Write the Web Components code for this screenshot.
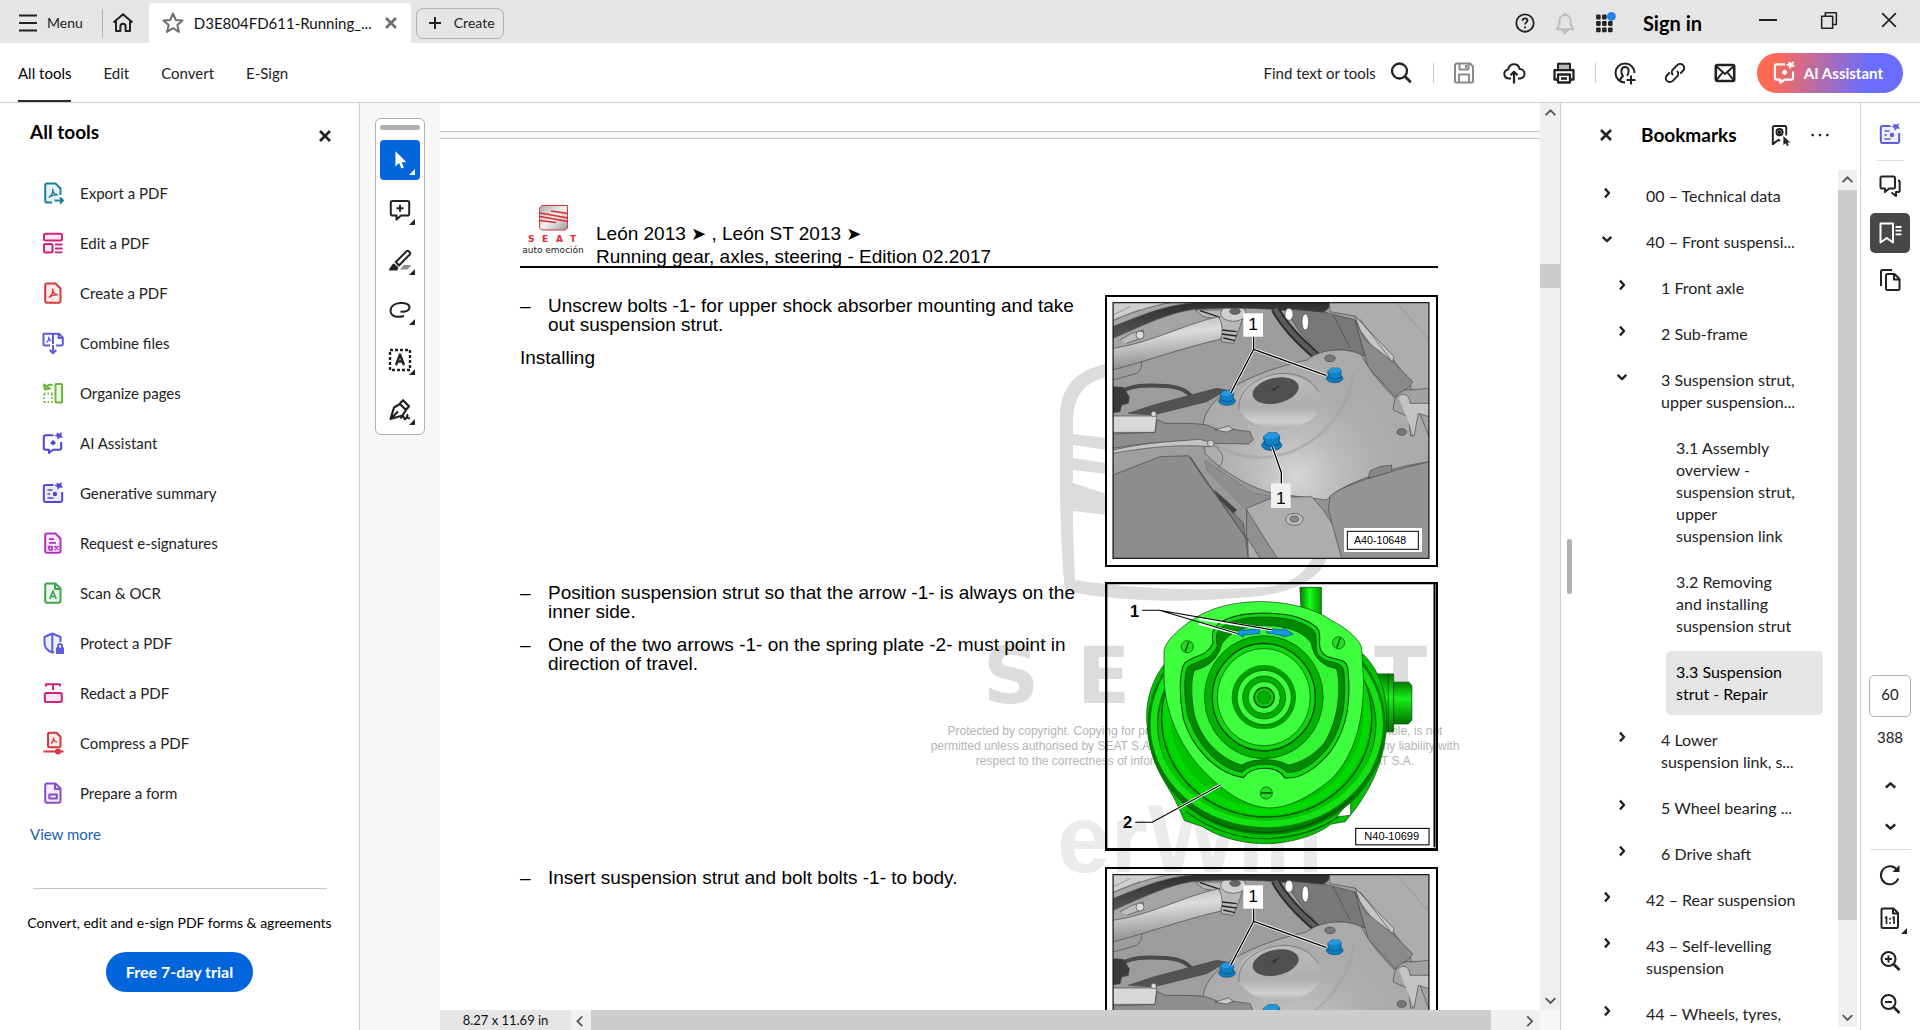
<!DOCTYPE html>
<html lang="en">
<head>
<meta charset="utf-8">
<title>D3E804FD611-Running gear</title>
<style>
  html, body { margin: 0; height: 100%; }
  body { font-family: Lato, "Open Sans", sans-serif; font-size: 15px; line-height: 20px; color: #222; background: #fff; overflow: hidden; }
</style>
</head>
<body>
<pdf-app></pdf-app>
<script>
const BASE = `
  *, *::before, *::after { box-sizing: border-box; }
  button, input { font: inherit; color: inherit; margin: 0; }
  button { background: none; border: 0; padding: 0; text-align: left; cursor: pointer; }
  button, a { display: inline-flex; align-items: center; }
  a { color: inherit; text-decoration: none; }
  svg { display: block; }
`;
function define(name, css, html) {
  const tpl = document.createElement('template');
  tpl.innerHTML = `<style>${BASE}${css}</style>${html}`;
  customElements.define(name, class extends HTMLElement {
    constructor() {
      super();
      this.attachShadow({ mode: 'open' }).append(tpl.content.cloneNode(true));
    }
  });
}

/* ---------- icons ---------- */
const acro = `<path d="M8.2 16.2C10.5 14.6 12 11.400 11.700 8.200c0 3 2 5.100 4.600 5.500-3-.1-5.800.7-8.100 2.500z" stroke-width="1.400"/>`;
const sheet = `<path d="M6 2.500h8.500l5 5V20a1.800 1.800 0 0 1-1.800 1.800H6A1.800 1.800 0 0 1 4.200 20V4.300A1.800 1.800 0 0 1 6 2.500z" fill="currentColor" fill-opacity=".1"/>`;
const sparkle = `<path d="M15.500 1.500l2.800 1.200 3-1.700-1 3 1.700 2.800-3-.4-2.200 2.400-.7-3-3-1.300 2.700-1z" fill="currentColor" stroke="none"/>`;
const lens = `<circle cx="10.500" cy="10" r="7"/><path d="M16 15.500l5.500 5.500" stroke-width="2.600"/>`;
const ICONS = {
  menu: `<path d="M3 4.500h18M3 12h18M3 19.500h18"/>`,
  home: `<path d="M2.500 11.500L12 3.200l9.500 8.300M5 10v10h4.400v-4.600a2.600 2.600 0 0 1 5.200 0V20H19V10"/>`,
  star: `<path d="M12 2.500l2.700 6.400 6.900.6-5.300 4.600 1.700 6.800L12 17.200l-6 3.700 1.700-6.800-5.300-4.600 6.900-.6z"/>`,
  close: `<path d="M6 6l12 12M18 6L6 18" stroke-width="3.200"/>`,
  xthin: `<path d="M4.500 4.500l15 15M19.500 4.500l-15 15" stroke-width="1.800"/>`,
  plus: `<path d="M12 5.500v13M5.500 12h13" stroke-width="2.200"/>`,
  help: `<circle cx="12" cy="12" r="9.500"/><path d="M9.300 9.500c0-1.600 1.100-2.600 2.700-2.600s2.700 1 2.700 2.400c0 2-2.600 2-2.600 4.200"/><path d="M12 15.800v2" stroke-width="2.200"/>`,
  bell: `<path d="M12 2v2M12 4c-3.800 0-5.600 2.800-5.600 6v3.600L3.800 18.200h16.400l-2.600-4.600V10c0-3.200-1.800-6-5.600-6z"/><path d="M9.500 19.500h5L12 22z" fill="currentColor"/>`,
  apps: `<g stroke-width="2.400"><rect x="3.500" y="4" width="2.600" height="3"/><rect x="10" y="4" width="2.600" height="3"/><rect x="3.500" y="11" width="2.600" height="3"/><rect x="10" y="11" width="2.600" height="3"/><rect x="16.500" y="11" width="2.600" height="3"/><rect x="3.500" y="18" width="2.600" height="3"/><rect x="10" y="18" width="2.600" height="3"/><rect x="16.500" y="18" width="2.600" height="3"/></g><circle cx="19" cy="4.800" r="4.800" fill="#2680eb" stroke="none"/>`,
  minimize: `<path d="M3 12h18"/>`,
  restore: `<path d="M4 8h12v13H4zM8 8V4h12v13h-4" stroke-width="1.700"/>`,
  search: `<circle cx="10.500" cy="10" r="7.500" stroke-width="2.300"/><path d="M16 15.500l5.800 5.800" stroke-width="2.700"/>`,
  save: `<path d="M4 2.500h14l3 3V20a1.500 1.500 0 0 1-1.500 1.500h-15A1.500 1.500 0 0 1 3 20V4zM7.500 3v5.500h9V3M7 21v-7.500h10V21M14 4v3"/>`,
  cloud: `<path d="M9 17.500H6.500a4.600 4.600 0 0 1-.4-9.100C7 5 9.200 3.300 12 3.300s5 1.900 5.600 4.700a4.700 4.700 0 0 1 .4 9.500h-2"/><path d="M12 22.500V11M8.500 14.200L12 10.700l3.500 3.500" stroke-width="2.200"/>`,
  print: `<path d="M6 8V2.800h12V8" fill="#bbb"/><path d="M6 18.500H2.500V9.200h19v9.300H18M6 13.500h12v8H6zM9 17.500h6" stroke-width="2.300"/>`,
  adduser: `<path d="M12 21.500A9.500 9.500 0 1 1 21.500 12M7 19.500c.5-3 2-3.500 3-4.400-2.500-3-2.500-9 2-9s4.500 5.500 2 8.800M18 14.500v9M13.500 19H22.500"/>`,
  link: `<path d="M10 14a4 4 0 0 1 0-5.600l4.300-4.300a4 4 0 0 1 5.700 5.700l-2.800 2.800M14 10a4 4 0 0 1 0 5.600l-4.300 4.300A4 4 0 0 1 4 14.200l2.800-2.800"/>`,
  mail: `<rect x="2.800" y="4" width="18.400" height="16" rx="1.500" stroke-width="2.600"/><path d="M3.500 5.500l8.500 7.500 8.500-7.500M3.500 19l6-7.500M20.500 19l-6-7.500"/>`,
  ai: `<path d="M12.500 4.200H4.600A1.800 1.800 0 0 0 2.800 6v11a1.800 1.800 0 0 0 1.800 1.800H8V22l4-3.200h6.400a1.800 1.800 0 0 0 1.800-1.800V11"/><path d="M12 10.200l1.800 1.500-1.600 1.600-1.700-1.300z" fill="currentColor"/>${sparkle}`,
  summary: `<path d="M12.500 4H4.600a1.800 1.800 0 0 0-1.800 1.800v13.400A1.800 1.800 0 0 0 4.600 21h14.800a1.800 1.800 0 0 0 1.800-1.800V11" fill="currentColor" fill-opacity=".1"/><path d="M6.500 9h5M6.500 13h2.500M6.500 17h6M12 13h3" stroke-width="1.700"/><circle cx="14" cy="13" r="1.200" fill="currentColor"/>${sparkle}`,
  export: `<path d="M11 21.500H6A1.800 1.800 0 0 1 4.200 19.700V4.300A1.800 1.800 0 0 1 6 2.500h8.500l5 5V14" fill="currentColor" fill-opacity=".1"/>${acro}<path d="M13.500 19.500h8M19 16.500l3 3-3 3"/>`,
  edit: `<rect x="3" y="2.800" width="18" height="6.800" rx="1.500" fill="currentColor" fill-opacity=".1"/><rect x="3" y="13" width="8.500" height="8.500" rx="1.500" fill="currentColor" fill-opacity=".1"/><path d="M14 13.500h7.500M14 17.500h7.500M14 21.300h7.500" stroke-width="1.800"/>`,
  create: sheet + acro,
  combine: `<path d="M9 14.500H3.800A1.300 1.300 0 0 1 2.500 13.200V2.800H11c1 0 1 .8 1 1.500 0-.7 0-1.500 1-1.500h5l3.800 3.800v6.600a1.300 1.300 0 0 1-1.300 1.300H15M12 4v9M17.500 3v4h4" /><path d="M5.500 11.500c1.500-1 2.500-3 2.300-5.500 0 2 1 3.500 2.500 3.800" stroke-width="1.200"/><path d="M12 14v8M8.800 19l3.200 3.200 3.200-3.200"/>`,
  organize: `<rect x="14.500" y="3" width="6.500" height="18.500" rx=".8" fill="currentColor" fill-opacity=".1"/><path d="M11.500 4.500C9 3 6 4 5 6.500M3 3.500l1 5 5-1z" /><path d="M3 12.500h9M3 21h9M3 13v8M11 13v8" stroke-dasharray="1.500 2" stroke-width="1.800"/>`,
  sign: `${sheet}<path d="M8 8.200h5M8 11.800h7" stroke-width="1.700"/><path d="M7.500 15.500h3.500v3.500H8.500zM13.500 15l4 4M17.500 15l-4 4" stroke-width="1.700"/>`,
  ocr: `${sheet}<path d="M14 3v5h5"/><path d="M8.800 18l3.200-8 3.200 8M10 15.500h4" stroke-width="1.700"/>`,
  protect: `<path d="M19.500 11V6L11.300 2.500 3.500 6v6c0 5 3.500 8 7.800 9.500 1 0 1.700-.5 1.700-.5" fill="currentColor" fill-opacity=".1"/><path d="M11.300 3v18"/><rect x="15" y="16.500" width="8" height="6.500" fill="currentColor" stroke="none"/><path d="M17 17v-2a2 2 0 0 1 4 0v2"/>`,
  redact: `<path d="M5 5.500V3.200h14v2.300M12 3.500V9"/><rect x="3.800" y="12" width="17" height="9" rx="1.500" fill="currentColor" fill-opacity=".1"/>`,
  compress: `<path d="M8.500 1.800h7l4 4v9a1.500 1.500 0 0 1-1.500 1.500H8.500A1.500 1.500 0 0 1 7 14.800V3.300a1.500 1.500 0 0 1 1.500-1.500z" fill="currentColor" fill-opacity=".1"/><path d="M10 12.500c1.700-1.200 2.700-3 2.500-5.500.1 2.200 1.500 3.700 3.500 4" stroke-width="1.300"/><path d="M2.500 20.500h20"/><circle cx="17" cy="20.500" r="2" fill="currentColor"/>`,
  form: `${sheet}<path d="M14 3v5h5"/><rect x="8.300" y="13.500" width="7.500" height="4" />`,
  arrow: `<path d="M7 2.500v16.500l4-3.600 2.600 6 2.700-1.200-2.600-5.800h5.300z" fill="currentColor" stroke="none"/>`,
  comment: `<path d="M4.600 3h14.800a1.800 1.800 0 0 1 1.800 1.800v11a1.800 1.800 0 0 1-1.800 1.800H13l-4.500 4v-4H4.600a1.800 1.800 0 0 1-1.800-1.800v-11A1.800 1.800 0 0 1 4.600 3z"/><path d="M12 6.800v7M8.500 10.300h7"/>`,
  highlight: `<path d="M12 21.500l3.500-4.500h8L19.500 21.500z" fill="#8f8f8f" stroke="none"/><path d="M7.800 14l10.700-10.700a1.500 1.500 0 0 1 2.200 0l1 1a1.500 1.500 0 0 1 0 2.200L11 17.500z" fill="#fff"/><path d="M5.500 16.500l3.800 3.300-.8 1.700H2z" fill="currentColor"/>`,
  draw: `<path d="M12.500 13.500c5 .7 9-1 9-4 0-3.400-4-4.700-9-4.500C7 5.200 2.500 8 2.500 13c0 4 4 5.800 7.500 5.800 1.700 0 4-.2 6-.8"/>`,
  textbox: `<rect x="2" y="2" width="20" height="20" stroke-dasharray="3 2" stroke-width="2.400"/><path d="M8 17l4-10.500L16 17M9.500 13.500h5" stroke-width="2.400"/>`,
  pen: `<path d="M2.500 21L6 9.500l6-3.500 6 6-3.500 5.500zM3 20.500l7-7M12 5.500l3-3.300 6 6-3 3.500" stroke-width="2.200"/><path d="M12.500 20.500c2-3 3-3 3.500-.5s2 1 3.500-3c-.5 3 0 4 2.500 3"/>`,
  addmark: `<path d="M4 3.500A1.500 1.500 0 0 1 5.500 2h11A1.500 1.500 0 0 1 18 3.500V12M4 3v18l6-4.500 1.500 1.200"/><circle cx="11" cy="8.500" r="3.200"/><circle cx="11" cy="8.500" r="1" fill="currentColor"/><path d="M15 12.500V22l2.500-2 1.300 3 1.800-.8-1.300-2.800h3z" fill="currentColor" stroke="none"/>`,
  dots: `<g fill="currentColor" stroke="none"><circle cx="4" cy="12" r="1.500"/><circle cx="12" cy="12" r="1.500"/><circle cx="20" cy="12" r="1.500"/></g>`,
  right: `<path d="M8.500 4.500l7 7.500-7 7.500" stroke-width="4"/>`,
  down: `<path d="M4.500 8.500l7.500 7 7.500-7" stroke-width="4"/>`,
  up: `<path d="M4.500 15.500l7.500-7 7.500 7" stroke-width="4"/>`,
  chats: `<path d="M4 2.500h11.500A1.500 1.500 0 0 1 17 4v9a1.500 1.500 0 0 1-1.500 1.500H11L7 18v-3.500H4A1.500 1.500 0 0 1 2.500 13V4A1.500 1.500 0 0 1 4 2.500z"/><path d="M20 6.500c1.200 0 1.700.5 1.700 1.500v8.500a1.500 1.500 0 0 1-1.500 1.500H18v4l-4.500-3.500"/>`,
  marks: `<path d="M2.500 2.500h12.500v19l-6.200-4.500-6.300 4.500z"/><path d="M17.500 6h6M17.500 9.700h6M17.500 13.300h6" stroke-width="1.800"/>`,
  pages: `<path d="M9.500 6h7l5 5v9.500a1.500 1.500 0 0 1-1.500 1.500H9.500A1.500 1.500 0 0 1 8 20.500v-13A1.500 1.500 0 0 1 9.500 6zM16 6v5.500h5"/><path d="M3 18V3.500A1.500 1.500 0 0 1 4.500 2H14"/>`,
  rotate: `<path d="M20.300 15.500a9 9 0 1 1-.8-8"/><path d="M21.500 2v7h-7z" fill="currentColor" stroke="none"/>`,
  fit: `<path d="M5 2.500h10.500l4.500 4.500v13.500a1.500 1.500 0 0 1-1.500 1.500H5a1.500 1.500 0 0 1-1.500-1.500V4A1.500 1.500 0 0 1 5 2.500zM15 3v4.500h4.500"/><path d="M7 12.200l1.500-1.200v7M14.500 12.200l1.500-1.200v7" stroke-width="1.700"/><circle cx="12" cy="12.800" r=".4" stroke-width="1.300"/><circle cx="12" cy="17" r=".4" stroke-width="1.300"/>`,
  zoomin: `${lens}<path d="M10.500 6.500v7M7 10h7"/>`,
  zoomout: `${lens}<path d="M7 10h7"/>`,
};
customElements.define('ui-icon', class extends HTMLElement {
  connectedCallback() {
    if (this.shadowRoot) return;
    const s = this.getAttribute('size') || 24;
    this.attachShadow({ mode: 'open' }).innerHTML =
      `<style>:host{display:inline-flex;flex:none}svg{display:block}</style>
       <svg width="${s}" height="${s}" viewBox="0 0 24 24" fill="none" stroke="currentColor" stroke-width="2" stroke-linejoin="round" aria-hidden="true">${ICONS[this.getAttribute('name')]}</svg>`;
  }
});

/* ---------- title bar ---------- */
define('title-bar', `
  :host { display: flex; align-items: center; height: 43px; background: #e5e5e5; padding: 0 20px 0 16px; font-size: 14px; }
  .menu { gap: 7px; padding-top: 3px; }
  .home { margin-left: 8px; padding-top: 3px; }
  .sep { width: 1px; height: 29px; background: #b3b3b3; margin: 3px 0 0 19px; }
  .tab { align-self: flex-end; display: flex; align-items: center; height: 40px; width: 262px; margin-left: 14px; padding: 0 10px 0 12px; background: #fff; border-radius: 4px 4px 0 0; font-size: 15px; color: #111; }
  .tab ui-icon { color: #6e6e6e; }
  .tab .name { flex: 1; padding-left: 9px; white-space: nowrap; }
  .create { height: 31px; margin: 3px 0 0 5px; padding: 0 8px 0 7px; gap: 8px; border: 1px solid #b1b1b1; border-radius: 7px; }
  .right { margin-left: auto; display: flex; align-items: center; gap: 17px; padding-top: 3px; }
  .bell { color: #bdbdbd; }
  .sign { font-size: 20px; font-weight: 700; color: #000; margin: 0 0 0 10px; }
  .win { gap: 38px; display: flex; margin: -6px 0 0 37px; }
`, `
  <button class="menu"><ui-icon name="menu"></ui-icon>Menu</button>
  <span class="sep"></span>
  <button class="home" aria-label="Home"><ui-icon name="home"></ui-icon></button>
  <div class="tab"><ui-icon name="star"></ui-icon><span class="name">D3E804FD611-Running_...</span><button aria-label="Close tab"><ui-icon name="close" size="20"></ui-icon></button></div>
  <button class="create"><ui-icon name="plus" size="22"></ui-icon>Create</button>
  <div class="right">
    <button aria-label="Help"><ui-icon name="help" size="22"></ui-icon></button>
    <button class="bell" aria-label="Notifications"><ui-icon name="bell" size="24"></ui-icon></button>
    <button aria-label="Apps"><ui-icon name="apps" size="22"></ui-icon></button>
    <button class="sign">Sign in</button>
    <div class="win">
      <button aria-label="Minimize"><ui-icon name="minimize"></ui-icon></button>
      <button aria-label="Restore"><ui-icon name="restore" size="22"></ui-icon></button>
      <button aria-label="Close"><ui-icon name="xthin" size="22"></ui-icon></button>
    </div>
  </div>
`);

/* ---------- toolbar ---------- */
define('main-toolbar', `
  :host { display: flex; align-items: center; height: 60px; border-bottom: 1px solid #d0d0d0; padding: 0 17px 0 18px; background: #fff; }
  nav { display: flex; align-self: stretch; gap: 32px; }
  nav a[aria-current] { color: #000; box-shadow: inset 0 -2px #2c2c2c; }
  .right { margin-left: auto; display: flex; align-items: center; }
  .find { gap: 13px; padding-right: 20px; }
  .sep { width: 1px; height: 20px; background: #ccc; }
  .grp { display: flex; gap: 26px; margin: 0 19px 0 18px; }
  .grp.two { margin: 0 20px 0 17px; }
  .dim { color: #8a8a8a; }
  .ai { height: 40px; padding: 0 20px 0 15px; gap: 7px; border-radius: 20px; color: #fff; font-weight: 700; background: linear-gradient(100deg, #ff6a55 12%, #6a6dff 75%); }
`, `
  <nav><a href="#" aria-current="page">All tools</a><a href="#">Edit</a><a href="#">Convert</a><a href="#">E-Sign</a></nav>
  <div class="right">
    <button class="find">Find text or tools<ui-icon name="search"></ui-icon></button>
    <span class="sep"></span>
    <div class="grp">
      <button class="dim" aria-label="Save"><ui-icon name="save"></ui-icon></button>
      <button aria-label="Upload"><ui-icon name="cloud"></ui-icon></button>
      <button aria-label="Print"><ui-icon name="print"></ui-icon></button>
    </div>
    <span class="sep"></span>
    <div class="grp two">
      <button aria-label="Share"><ui-icon name="adduser"></ui-icon></button>
      <button aria-label="Copy link"><ui-icon name="link"></ui-icon></button>
      <button aria-label="Email"><ui-icon name="mail"></ui-icon></button>
    </div>
    <button class="ai"><ui-icon name="ai" size="25"></ui-icon>AI Assistant</button>
  </div>
`);

/* ---------- left panel ---------- */
customElements.define('tool-item', class extends HTMLElement {
  connectedCallback() {
    if (this.shadowRoot) return;
    this.attachShadow({ mode: 'open' }).innerHTML = `<style>${BASE}
      :host { display: block; }
      button { width: 100%; height: 50px; gap: 15px; padding-left: 41px; font-size: 15px; }
      ui-icon { color: ${this.getAttribute('tint')}; }
    </style><button><ui-icon name="${this.getAttribute('icon')}"></ui-icon><slot></slot></button>`;
  }
});
define('tools-panel', `
  :host { display: flex; flex-direction: column; border-right: 1px solid #d0d0d0; background: #fff; }
  header { display: flex; justify-content: space-between; padding: 17px 24px 0 30px; height: 65px; }
  h2 { margin: 0; font-size: 19px; line-height: 24px; font-weight: 700; color: #000; }
  header button { align-self: flex-start; margin-top: 6px; }
  .more { margin: 6px 0 0 30px; color: #1a5fb4; align-self: flex-start; }
  hr { width: 294px; border: 0; border-top: 1px solid #c4c4c4; margin: 44px 0 0 33px; }
  p { margin: 24px 0 19px; text-align: center; font-size: 14px; color: #000; white-space: nowrap; }
  .trial { align-self: center; height: 40px; padding: 0 20px; border-radius: 20px; background: #0265dc; color: #fff; font-weight: 700; font-size: 16px; }
`, `
  <header><h2>All tools</h2><button aria-label="Close panel"><ui-icon name="close" size="20"></ui-icon></button></header>
  <tool-item icon="export" tint="#1d8296">Export a PDF</tool-item>
  <tool-item icon="edit" tint="#d0217c">Edit a PDF</tool-item>
  <tool-item icon="create" tint="#d7373f">Create a PDF</tool-item>
  <tool-item icon="combine" tint="#5c5ce0">Combine files</tool-item>
  <tool-item icon="organize" tint="#6ab83a">Organize pages</tool-item>
  <tool-item icon="ai" tint="#5046d8">AI Assistant</tool-item>
  <tool-item icon="summary" tint="#5046d8">Generative summary</tool-item>
  <tool-item icon="sign" tint="#b130bd">Request e-signatures</tool-item>
  <tool-item icon="ocr" tint="#3da74e">Scan &amp; OCR</tool-item>
  <tool-item icon="protect" tint="#5c5ce0">Protect a PDF</tool-item>
  <tool-item icon="redact" tint="#d0217c">Redact a PDF</tool-item>
  <tool-item icon="compress" tint="#d7373f">Compress a PDF</tool-item>
  <tool-item icon="form" tint="#864ccc">Prepare a form</tool-item>
  <a class="more" href="#">View more</a>
  <hr>
  <p>Convert, edit and e-sign PDF forms &amp; agreements</p>
  <button class="trial">Free 7-day trial</button>
`);

/* ---------- quick tools palette ---------- */
define('quick-tools', `
  :host { display: flex; flex-direction: column; align-items: center; gap: 10px; width: 50px; height: 317px; padding: 6px 0 5px; border: 1px solid #b1b1b1; border-radius: 6px; background: #fff; }
  .grip { width: 40px; height: 5px; border-radius: 2px; background: #b1b1b1; flex: none; }
  button { width: 40px; height: 40px; flex: none; justify-content: center; position: relative; border-radius: 4px; }
  button::after { content: ""; position: absolute; right: 5px; bottom: 5px; border: 3px solid; border-color: transparent currentColor currentColor transparent; }
  .on { background: #0265dc; color: #fff; }
`, `
  <span class="grip"></span>
  <button class="on" aria-label="Select"><ui-icon name="arrow" size="22"></ui-icon></button>
  <button aria-label="Comment"><ui-icon name="comment"></ui-icon></button>
  <button aria-label="Highlight"><ui-icon name="highlight"></ui-icon></button>
  <button aria-label="Draw"><ui-icon name="draw"></ui-icon></button>
  <button aria-label="Text box"><ui-icon name="textbox"></ui-icon></button>
  <button aria-label="Sign"><ui-icon name="pen"></ui-icon></button>
`);

/* ---------- figures ---------- */
define('strut-mount-figure', `:host { display: block; } svg { width: 333px; height: 272px; } .t { font-family: "Liberation Sans", sans-serif; fill: #000; }`, `
<svg viewBox="195 45 999 816" role="img" aria-label="Upper shock absorber mounting">
  <defs>
    <linearGradient id="bg" x1="0" y1="0" x2="1" y2="1"><stop offset="0" stop-color="#a8a8a8"/><stop offset="1" stop-color="#8c8c8c"/></linearGradient>
    <linearGradient id="tube" x1="0" y1="0" x2=".2" y2="1"><stop offset="0" stop-color="#b0b0b0"/><stop offset=".4" stop-color="#dcdcdc"/><stop offset="1" stop-color="#8b8b8b"/></linearGradient>
    <radialGradient id="tower" gradientUnits="userSpaceOnUse" cx="770" cy="590" r="420"><stop offset="0" stop-color="#d6d6d6"/><stop offset=".3" stop-color="#bcbcbc"/><stop offset=".6" stop-color="#adadad"/><stop offset="1" stop-color="#a9a9a9"/></radialGradient>
    <linearGradient id="dome" x1="0" y1="0" x2="0" y2="1"><stop offset="0" stop-color="#bcbcbc"/><stop offset=".6" stop-color="#aeaeae"/><stop offset=".86" stop-color="#d0d0d0"/><stop offset="1" stop-color="#b0b0b0"/></linearGradient>
    <linearGradient id="hose" x1="0" y1="0" x2="0" y2="1"><stop offset="0" stop-color="#2e2e2e"/><stop offset="1" stop-color="#565656"/></linearGradient>
    <clipPath id="c"><rect x="219" y="68" width="948" height="767"/></clipPath>
    <g id="bolt"><ellipse cx="1" cy="8" rx="25" ry="13" fill="#0d7cc0" stroke="#07507c" stroke-width="2"/><path d="M-20 -13L-8 -23H14L21 -15L19 5L4 11L-16 6Z" fill="#0f7fc6" stroke="#07507c" stroke-width="2"/><path d="M-20 -13L-8 -23H14L21 -15L7 -8L-10 -7Z" fill="#2596d8"/></g>
  </defs>
  <rect x="198" y="48" width="993" height="810" fill="none" stroke="#000" stroke-width="6"/>
  <g clip-path="url(#c)" stroke="#484848" stroke-width="2" stroke-linejoin="round">
    <rect x="219" y="68" width="948" height="767" fill="url(#bg)"/>
    <path d="M219 68H390C330 78 270 100 219 122Z" fill="#cfcfcf"/>
    <path d="M219 120L300 88M219 105L270 80" stroke="#777"/>
    <path d="M219 275L470 180L540 170L600 120L700 90L830 230L640 270C560 300 510 330 490 370L219 420Z" fill="#9c9c9c" stroke="none"/>
    <path d="M465 90L490 110L535 118L545 185L580 190L600 140L615 90Z" fill="#b8b8b8"/>
    <path d="M545 150l45 5M545 162l45 6M550 174l35 8M480 92l60 20" stroke="#222" stroke-width="4"/>
    <ellipse cx="580" cy="100" rx="38" ry="24" fill="#d0d0d0"/><ellipse cx="585" cy="94" rx="16" ry="9" fill="#666"/>
    <path d="M219 205C330 190 440 130 535 110C548 125 550 165 540 178C440 200 330 240 219 270Z" fill="url(#tube)"/>
    <path d="M240 180L275 160L310 150V172L260 190" fill="#bcbcbc"/><circle cx="300" cy="165" r="12" fill="#ddd"/>
    <path d="M219 300L290 280C305 270 305 255 305 245" fill="none"/>
    <path d="M219 140C330 95 380 75 470 68H868C872 98 830 106 800 100C700 82 560 82 460 88C380 100 300 140 219 175Z" fill="url(#hose)"/>
    <path d="M705 86C740 150 790 195 835 232" fill="none" stroke="#2c2c2c" stroke-width="26"/><path d="M705 86C740 150 790 195 835 232" fill="none" stroke="#5c5c5c" stroke-width="14"/>
    <path d="M740 86L860 98L945 120L975 228L900 208L845 228C800 180 760 140 740 86Z" fill="#787878"/>
    <path d="M880 105L930 205" fill="none"/>
    <path d="M868 68H1167V335L1115 330C1110 300 1050 220 945 108L870 95Z" fill="#adadad"/>
    <path d="M1070 68L1167 180" stroke="#8c8c8c" fill="none"/>
    <path d="M945 108L1062 230L1058 246L1000 205L960 150Z" fill="#c6c6c6"/><path d="M960 118L1050 236" fill="none"/>
    <path d="M945 120L975 180L1060 246L1118 305L1110 318L1066 350L985 262Z" fill="#8a8a8a"/>
    <ellipse cx="747" cy="103" rx="12" ry="18" fill="#fff"/><ellipse cx="796" cy="126" rx="10" ry="24" fill="#fff"/>
    <path d="M219 350C270 310 330 315 380 318C420 322 445 335 455 352" fill="none" stroke="#4a4a4a" stroke-width="12"/>
    <path d="M265 400L340 375L530 325L560 330L500 365L340 405Z" fill="#525252"/>
    <path d="M219 320L250 322L268 350L265 370L245 375L240 395L219 398Z" fill="#3a3a3a"/>
    <path d="M490 430C500 350 620 280 800 240C850 200 930 205 965 225C990 280 1050 340 1070 360H1167V545C1060 560 900 610 860 660L740 645C640 640 530 560 495 520Z" fill="url(#tower)"/>
    <path d="M495 440C510 520 640 550 740 520C860 480 930 370 940 280" fill="none" stroke="#9d9d9d" stroke-width="8" opacity=".5"/>
    <path d="M640 640L495 540L500 570L620 690L700 650Z" fill="#8f8f8f" stroke-opacity=".4"/>
    <ellipse cx="718" cy="365" rx="125" ry="82" fill="url(#dome)" stroke="none"/>
    <path d="M597 390C590 320 670 282 730 280C790 280 820 310 835 335" fill="none" stroke="#666"/>
    <ellipse cx="707" cy="332" rx="69" ry="37" transform="rotate(-12 707 332)" fill="#505050"/><path d="M690 330l30-14-15 16z" fill="#333" stroke="none"/>
    <ellipse cx="870" cy="235" rx="16" ry="10" fill="#777"/><ellipse cx="1085" cy="456" rx="14" ry="10" fill="#777"/>
    <path d="M1060 390C1060 340 1090 325 1115 330L1167 325V470L1130 375L1120 468H1112L1105 410Z" fill="#a2a2a2"/>
    <path d="M1075 350C1090 335 1110 345 1110 370L1135 370H1167V410L1135 400L1122 468" fill="#c4c4c4"/>
    <path d="M219 408H350L345 457H219Z" fill="#d8d8d8"/><circle cx="341" cy="402" r="8" fill="#ddd"/>
    <path d="M219 462L345 457L352 418L375 430C440 430 470 430 500 435L540 450L560 445L630 455L640 480L625 492L530 490C420 475 300 490 219 505Z" fill="#8e8e8e"/>
    <path d="M219 510C330 485 400 485 480 478L520 490L510 500C430 492 330 500 219 520Z" fill="#c4c4c4"/>
    <circle cx="512" cy="490" r="10" fill="#ccc"/><path d="M525 450l40-12 15 10-20 8z" fill="#ccc"/>
    <path d="M520 495C550 515 560 540 530 568" fill="none"/>
    <path d="M219 585L360 530L445 527L660 835H219Z" fill="#8d8d8d"/>
    <path d="M450 530L500 610L610 730L625 835H660Z" fill="#7c7c7c"/><path d="M525 632L590 690L580 700L540 660Z" fill="#444"/>
    <path d="M620 685L700 652L815 650L850 690L945 835H625Z" fill="#adadad"/><path d="M620 690V770L660 835H712Z" fill="#909090"/>
    <path d="M870 650C900 620 1000 585 1167 545V835H905L865 690Z" fill="#949494"/>
    <path d="M985 595L990 572L1020 560L1055 555V575L1020 585Z" fill="#888"/>
    <ellipse cx="763" cy="718" rx="26" ry="18" fill="#bdbdbd"/><ellipse cx="763" cy="717" rx="13" ry="9" fill="#888"/>
  </g>
  <rect x="219" y="68" width="948" height="767" fill="none" stroke="#000" stroke-width="3"/>
  <use href="#bolt" x="560" y="355"/><use href="#bolt" x="883" y="287"/><g transform="translate(694 486) scale(1.200)"><use href="#bolt"/></g>
  <g fill="none" stroke="#fff" stroke-width="9"><path d="M641 168V208L572 340M641 208L858 286M697 500L724 578V625"/></g>
  <g fill="none" stroke="#000" stroke-width="4"><path d="M641 168V208L572 340M641 208L858 286M697 500L724 578V625"/></g>
  <rect x="610" y="100" width="59" height="70" fill="#fff"/><rect x="693" y="610" width="59" height="74" fill="#f0f0f0"/>
  <text class="t" x="625" y="150" font-size="52">1</text><text class="t" x="708" y="671" font-size="52">1</text>
  <rect x="912" y="744" width="234" height="72" fill="#fff"/><rect x="922" y="754" width="213" height="54" fill="none" stroke="#000" stroke-width="3"/>
  <text class="t" x="942" y="791" font-size="32">A40-10648</text>
</svg>`);

define('spring-plate-figure', `:host { display: block; } svg { width: 333px; height: 270px; } .t { font-family: "Liberation Sans", sans-serif; fill: #000; }`, `
<svg viewBox="518 678 931 755" role="img" aria-label="Spring plate with direction arrows">
  <defs>
    <linearGradient id="v" x1="0" y1="0" x2="1" y2="0"><stop offset="0" stop-color="#007a00"/><stop offset=".45" stop-color="#1aff1a"/><stop offset="1" stop-color="#009a00"/></linearGradient>
    <linearGradient id="h" x1="0" y1="0" x2="0" y2="1"><stop offset="0" stop-color="#007a00"/><stop offset=".4" stop-color="#19f019"/><stop offset="1" stop-color="#006e00"/></linearGradient>
  </defs>
  <g stroke="#064806" stroke-width="2" stroke-linejoin="round">
    <path d="M1063 693H1123V790H1068Z" fill="url(#v)"/>
    <path d="M1270 935H1325V1097H1270Z" fill="url(#h)"/><path d="M1310 933V1097" fill="none"/>
    <path d="M1325 958H1368L1376 968V1064L1366 1075H1325Z" fill="url(#h)"/>
    <path d="M690 900C640 960 630 1030 636 1080C640 1180 690 1240 715 1290L740 1345L790 1362C850 1400 920 1410 970 1410C1050 1408 1120 1380 1150 1355L1190 1348L1220 1310C1270 1240 1300 1170 1305 1080C1310 1000 1290 930 1240 880Z" fill="#00c400"/>
    <path d="M1165 1335L1205 1285V1330Z" fill="#fff"/>
  </g>
  <g fill="none">
    <ellipse cx="970" cy="1080" rx="318" ry="290" stroke="#007a00" stroke-width="30"/>
    <ellipse cx="970" cy="1075" rx="316" ry="280" stroke="#14e014" stroke-width="18"/>
    <ellipse cx="970" cy="1060" rx="294" ry="275" stroke="#055005" stroke-width="4"/>
    <ellipse cx="970" cy="1050" rx="280" ry="270" stroke="#00d800" stroke-width="20"/>
    <path d="M725 1285C800 1350 880 1378 970 1378C1060 1378 1150 1340 1215 1275M745 1320C820 1375 900 1396 970 1396C1060 1392 1120 1370 1170 1335" stroke="#055005" stroke-width="3"/>
  </g>
  <g stroke="#064806" stroke-width="2" stroke-linejoin="round">
    <path d="M683 870C690 840 720 815 740 800C800 750 880 732 960 733C1040 735 1110 755 1150 785C1200 810 1228 840 1235 860L1241 950C1241 1060 1220 1160 1150 1230C1100 1270 1040 1310 975 1310C900 1305 830 1250 770 1180C700 1090 683 1000 683 940Z" fill="#3dff3d"/>
    <path d="M960 765C1040 765 1080 780 1110 805C1128 825 1110 850 1122 870C1142 905 1190 880 1197 920C1205 1000 1200 1080 1150 1150C1110 1200 1060 1232 1020 1225C1000 1190 930 1190 905 1225C830 1215 760 1140 737 1060C725 1000 725 930 740 905C770 880 800 890 820 850C815 820 820 810 835 795C870 770 920 765 960 765Z" fill="#10d810" stroke-width="3"/>
    <path d="M960 776C1035 776 1070 790 1100 812C1116 830 1102 855 1112 878C1136 915 1180 890 1186 928C1192 1000 1188 1076 1142 1140C1110 1182 1064 1214 1026 1210C1000 1180 930 1180 900 1210C834 1200 774 1130 750 1054C738 1000 738 935 750 915C780 895 812 900 832 856C826 828 830 816 845 804C880 780 920 776 960 776Z" fill="#008a00"/>
    <path d="M962 800C1040 800 1080 825 1095 850C1100 890 1130 915 1165 920C1178 960 1175 1060 1130 1130C1100 1165 1060 1185 1030 1190C1000 1170 930 1170 900 1190C850 1175 790 1130 768 1050C758 1000 758 950 768 925C810 915 835 890 845 850C870 815 910 800 962 800Z" fill="#34f534"/>
  </g>
  <g stroke="#064806" stroke-width="2">
    <ellipse cx="962" cy="1000" rx="166" ry="172" fill="#00b400" /><ellipse cx="962" cy="1000" rx="144" ry="150" fill="#10d810" stroke-width="4"/>
    <ellipse cx="962" cy="1000" rx="130" ry="136" fill="#3dff3d"/><circle cx="962" cy="1000" r="90" fill="#009e00" stroke="none"/><circle cx="963" cy="1001" r="76" fill="#3dff3d"/>
    <circle cx="963" cy="1001" r="60" fill="#00ae00"/><circle cx="963" cy="1001" r="45" fill="#3dff3d"/><circle cx="963" cy="1001" r="28" fill="#10cc10" stroke-width="4"/><circle cx="963" cy="1001" r="18" fill="#00b000" stroke-dasharray="8 5"/>
    <g fill="#22dd22"><circle cx="748" cy="859" r="17"/><circle cx="1171" cy="848" r="17"/><circle cx="969" cy="1268" r="17"/></g>
    <path d="M742 872L752 846M1166 862L1176 834M954 1268H984" stroke-width="4"/>
  </g>
  <g fill="#1797e6" stroke="#064a86" stroke-width="2"><path d="M885 822L905 808V813L950 809V822L905 826V832Z"/><path d="M970 808L1015 812L1018 807L1044 824L1016 832V828L970 820Z"/></g>
  <g fill="none" stroke="#fff" stroke-width="8"><path d="M780 794L888 822M780 780L985 812M720 1312L842 1245"/></g>
  <g fill="none" stroke="#000" stroke-width="3"><path d="M622 757H670L888 822M670 757L985 812M602 1350H650L842 1245"/></g>
  <text class="t" x="588" y="775" font-size="46" font-weight="700">1</text><text class="t" x="568" y="1365" font-size="46" font-weight="700">2</text>
  <rect x="1219" y="1367" width="205" height="46" fill="#fff" stroke="#000" stroke-width="3"/>
  <text class="t" x="1243" y="1400" font-size="31">N40-10699</text>
  <path d="M521 681H1446V1427H521Z" fill="none" stroke="#000" stroke-width="7"/><path d="M1439 681V1420M521 1424H1442" stroke="#000" stroke-width="5"/>
</svg>`);

define('seat-logo', `:host { display: block; } svg { width: 66px; height: 54px; } text { font-family: "DejaVu Sans", sans-serif; }`, `
<svg viewBox="0 0 66 54" role="img" aria-label="SEAT">
  <defs><linearGradient id="g" x1="0" y1="0" x2="1" y2="1"><stop offset="0" stop-color="#aaa"/><stop offset=".5" stop-color="#f2f2f2"/><stop offset="1" stop-color="#999"/></linearGradient></defs>
  <path d="M23 1.500H47.500V23C47.500 25 46 26 44 26H24C21 26 19.500 25 19.500 22V5C19.500 3 21 1.500 23 1.500Z" fill="url(#g)" stroke="#d5373c" stroke-width="1"/>
  <path d="M20 9L48 14M20 12.500L48 17.500M31 7L48 9.500M20 16.500L36 18.500" stroke="#d92d33" stroke-width="1.500"/>
  <text y="38" font-size="9" font-weight="700" fill="#d92d33"><tspan x="8">S</tspan><tspan x="22">E</tspan><tspan x="36">A</tspan><tspan x="50">T</tspan></text>
  <text x="33" y="49" font-size="9" text-anchor="middle" fill="#222">auto emoción</text>
</svg>`);

define('page-watermark', `:host { display: block; } svg { width: 560px; height: 560px; } text { font-family: "Liberation Sans", sans-serif; }`, `
<svg viewBox="0 0 560 560">
  <g fill="#dcdcdc">
    <path d="M187 24C158 29 141 45 140 75V140C140 190 143 230 145 251C200 262 260 263 330 257C370 254 400 240 407 218H392C385 235 365 246 345 247C290 251 220 250 155 240C154 215 153 195 153 172V80C154 55 165 42 187 37Z"/>
    <path d="M153 94L187 98V110L153 105ZM153 118L187 123V134L153 130ZM153 143L187 154V175L153 171Z"/>
    <text y="363" font-size="78" style="font-family:'DejaVu Sans',sans-serif;font-weight:700"><tspan x="63">S</tspan><tspan x="157">E</tspan><tspan x="290">A</tspan><tspan x="454">T</tspan></text>
  </g>
  <text x="270" y="532" font-size="96" font-weight="700" fill="#ebebeb" text-anchor="middle">erWin</text>
  <g font-size="12" fill="#b4b4b4" text-anchor="middle">
    <text x="275" y="395">Protected by copyright. Copying for private or commercial purposes, in part or in whole, is not</text>
    <text x="275" y="410">permitted unless authorised by SEAT S.A. SEAT S.A. does not guarantee or accept any liability with</text>
    <text x="275" y="425">respect to the correctness of information in this document. Copyright by SEAT S.A.</text>
  </g>
</svg>`);

/* ---------- document ---------- */
define('doc-step', `
  :host { display: grid; grid-template-columns: 28px auto; justify-content: start; margin-bottom: 14px; line-height: 19px; white-space: nowrap; }
`, `<span>–</span><span><slot></slot></span>`);

define('doc-page', `
  :host { display: block; position: relative; padding: 65px 102px 0 80px; font-family: "Liberation Sans", Arial, sans-serif; font-size: 19px; color: #000; }
  page-watermark { position: absolute; left: 480px; top: 201px; }
  header { display: flex; align-items: flex-end; gap: 10px; height: 64px; border-bottom: 2px solid #000; }
  seat-logo { align-self: flex-start; }
  h1 { margin: 0 0 -2px; font-size: 19px; line-height: 23px; font-weight: 400; white-space: nowrap; }
  .arr { font-family: "DejaVu Sans", sans-serif; font-size: 18px; line-height: 1; }
  .rows { display: grid; gap: 15px; margin-top: 27px; position: relative; }
  .row { display: grid; grid-template-columns: 1fr 333px; }
  .row > div { padding-top: 1px; }
  p { margin: 0; line-height: 19px; }
`, `
  <page-watermark></page-watermark>
  <header><seat-logo></seat-logo><h1>León 2013 <span class="arr">➤</span> , León ST 2013 <span class="arr">➤</span><br>Running gear, axles, steering - Edition 02.2017</h1></header>
  <div class="rows">
    <section class="row"><div><doc-step>Unscrew bolts -1- for upper shock absorber mounting and take<br>out suspension strut.</doc-step><p>Installing</p></div><strut-mount-figure></strut-mount-figure></section>
    <section class="row"><div><doc-step>Position suspension strut so that the arrow -1- is always on the<br>inner side.</doc-step><doc-step>One of the two arrows -1- on the spring plate -2- must point in<br>direction of travel.</doc-step></div><spring-plate-figure></spring-plate-figure></section>
    <section class="row"><div><doc-step>Insert suspension strut and bolt bolts -1- to body.</doc-step></div><strut-mount-figure></strut-mount-figure></section>
  </div>
`);

customElements.define('scroll-bar', class extends HTMLElement {
  connectedCallback() {
    if (this.shadowRoot) return;
    const v = !this.hasAttribute('horizontal');
    const [before, size, after] = this.getAttribute('parts').split(' ');
    const a = v ? ['M2 9l6-6 6 6', 'M2 4l6 6 6-6'] : ['M9 2L3 8l6 6', 'M4 2l6 6-6 6'];
    const arrow = d => `<button aria-label="Scroll"><svg width="13" height="13" viewBox="0 0 16 14" fill="none" stroke="#555" stroke-width="2.200"><path d="${d}"/></svg></button>`;
    this.attachShadow({ mode: 'open' }).innerHTML = `<style>${BASE}
      :host { display: flex; flex-direction: ${v ? 'column' : 'row'}; background: #f0f0f0; }
      button { flex: none; ${v ? 'height' : 'width'}: 20px; justify-content: center; }
      .track { flex: 1; display: flex; flex-direction: inherit; min-height: 0; }
      .a { flex: ${before}; } .thumb { flex: ${size}; background: #cdcdcd; } .b { flex: ${after}; }
    </style>${arrow(a[0])}<div class="track"><span class="a"></span><span class="thumb"></span><span class="b"></span></div>${arrow(a[1])}`;
  }
});

define('doc-view', `
  :host { display: grid; grid-template-columns: 80px 1fr 20px; grid-template-rows: 1fr 20px; border-right: 1px solid #d0d0d0; background: #f7f7f7; min-height: 0; }
  .gutter { grid-row: 1 / 3; padding: 15px 0 0 15px; }
  .pages { overflow: hidden; min-width: 0; background: #fff; }
  .prev { height: 29px; background: #fff; border-bottom: 1px solid #c6c6c6; }
  .gap { height: 7px; background: #f7f7f7; border-bottom: 1px solid #c6c6c6; }
  .foot { display: flex; min-width: 0; font-size: 13px; }
  .size { width: 131px; background: #e6e6e6; text-align: center; color: #111; }
  .foot scroll-bar { flex: 1; }
`, `
  <div class="gutter"><quick-tools></quick-tools></div>
  <div class="pages"><div class="prev"></div><div class="gap"></div><doc-page></doc-page></div>
  <scroll-bar parts="141 24 700"></scroll-bar>
  <div class="foot"><span class="size">8.27 x 11.69 in</span><scroll-bar horizontal parts="0 900 29"></scroll-bar></div>
`);

/* ---------- bookmarks ---------- */
customElements.define('bookmark-item', class extends HTMLElement {
  connectedCallback() {
    if (this.shadowRoot) return;
    const lvl = +this.getAttribute('level') || 0, st = this.getAttribute('state');
    this.attachShadow({ mode: 'open' }).innerHTML = `<style>${BASE}
      :host { display: flex; flex: none; padding: 0 15px 0 ${39 + 15 * lvl}px; }
      .tw { flex: none; width: 14px; height: 14px; margin-top: 11px; visibility: ${st ? 'visible' : 'hidden'}; }
      .lab { flex: 1; margin-left: 22px; padding: 10px; line-height: 22px; white-space: nowrap; border-radius: 5px; font-size: 16px; }
      :host([selected]) .lab { background: #e5e5e5; color: #000; }
    </style><button class="tw" aria-label="Toggle"><ui-icon name="${st === 'open' ? 'down' : 'right'}" size="14"></ui-icon></button><button class="lab"><span><slot></slot></span></button>`;
  }
});
define('bookmarks-panel', `
  :host { display: grid; grid-template-columns: 1fr 19px 3px; grid-template-rows: 67px 1fr; border-right: 1px solid #d0d0d0; background: #fff; min-height: 0; position: relative; }
  header { grid-column: 1 / 4; display: flex; align-items: center; padding: 0 29px 3px 35px; }
  h2 { flex: 1; margin: 0 0 0 25px; font-size: 19px; line-height: 24px; font-weight: 700; color: #000; }
  header button + button { margin-left: 17px; }
  .list { display: flex; flex-direction: column; gap: 4px; overflow: hidden; padding-top: 5px; }
  scroll-bar { margin-bottom: 3px; }
  .grip { position: absolute; left: 6px; top: calc(50% - 28px); width: 5px; height: 55px; border-radius: 2px; background: #b1b1b1; }
`, `
  <header><button aria-label="Close bookmarks"><ui-icon name="close" size="20"></ui-icon></button><h2>Bookmarks</h2><button aria-label="New bookmark"><ui-icon name="addmark" size="23"></ui-icon></button><button aria-label="Options"><ui-icon name="dots" size="22"></ui-icon></button></header>
  <div class="list">
    <bookmark-item state="closed">00 – Technical data</bookmark-item>
    <bookmark-item state="open">40 – Front suspensi...</bookmark-item>
    <bookmark-item level="1" state="closed">1 Front axle</bookmark-item>
    <bookmark-item level="1" state="closed">2 Sub-frame</bookmark-item>
    <bookmark-item level="1" state="open">3 Suspension strut,<br>upper suspension...</bookmark-item>
    <bookmark-item level="2">3.1 Assembly<br>overview -<br>suspension strut,<br>upper<br>suspension link</bookmark-item>
    <bookmark-item level="2">3.2 Removing<br>and installing<br>suspension strut</bookmark-item>
    <bookmark-item level="2" selected>3.3 Suspension<br>strut - Repair</bookmark-item>
    <bookmark-item level="1" state="closed">4 Lower<br>suspension link, s...</bookmark-item>
    <bookmark-item level="1" state="closed">5 Wheel bearing ...</bookmark-item>
    <bookmark-item level="1" state="closed">6 Drive shaft</bookmark-item>
    <bookmark-item state="closed">42 – Rear suspension</bookmark-item>
    <bookmark-item state="closed">43 – Self-levelling<br>suspension</bookmark-item>
    <bookmark-item state="closed">44 – Wheels, tyres,</bookmark-item>
  </div>
  <scroll-bar parts="0 728 87"></scroll-bar>
  <span class="grip"></span>
`);

/* ---------- right rail ---------- */
define('side-rail', `
  :host { display: flex; flex-direction: column; align-items: center; background: #fff; padding: 11px 1px 3px 0; }
  button { width: 40px; height: 40px; justify-content: center; border-radius: 5px; flex: none; position: relative; }
  .gen { color: #5c5ce0; }
  .line { width: 27px; height: 1px; background: #dcdcdc; margin: 6px 0 5px; }
  .on { background: #474747; color: #fff; margin: 7px 0; }
  .low { margin-top: auto; display: flex; flex-direction: column; align-items: center; }
  input { width: 42px; height: 42px; border: 1px solid #b1b1b1; border-radius: 5px; text-align: center; background: #fff; padding: 0 0 4px; font-size: 15px; color: #222; }
  .low span { font-size: 15px; margin: 10px 0 18px; }
  .low .wide { width: 41px; margin: 2px 0 5px; }
  .low button { margin-bottom: 3px; }
  .low button.tight { margin-bottom: 1px; }
  .fit::after { content: ""; position: absolute; right: 3px; bottom: 4px; border: 3px solid; border-color: transparent currentColor currentColor transparent; }
`, `
  <button class="gen" aria-label="Generative summary"><ui-icon name="summary"></ui-icon></button>
  <div class="line"></div>
  <button aria-label="Comments"><ui-icon name="chats"></ui-icon></button>
  <button class="on" aria-label="Bookmarks"><ui-icon name="marks"></ui-icon></button>
  <button aria-label="Pages"><ui-icon name="pages"></ui-icon></button>
  <div class="low">
    <input aria-label="Page number" value="60">
    <span>388</span>
    <button class="tight" aria-label="Previous page"><ui-icon name="up" size="15"></ui-icon></button>
    <button class="tight" aria-label="Next page"><ui-icon name="down" size="15"></ui-icon></button>
    <div class="line wide"></div>
    <button aria-label="Rotate"><ui-icon name="rotate"></ui-icon></button>
    <button class="fit" aria-label="Page display"><ui-icon name="fit"></ui-icon></button>
    <button aria-label="Zoom in"><ui-icon name="zoomin"></ui-icon></button>
    <button aria-label="Zoom out"><ui-icon name="zoomout"></ui-icon></button>
  </div>
`);

define('pdf-app', `
  :host { display: flex; flex-direction: column; height: 100vh; }
  main { flex: 1; min-height: 0; display: grid; grid-template-columns: 360px 1fr 300px 59px; grid-template-rows: 100%; }
`, `
  <title-bar></title-bar>
  <main-toolbar></main-toolbar>
  <main><tools-panel></tools-panel><doc-view></doc-view><bookmarks-panel></bookmarks-panel><side-rail></side-rail></main>
`);
</script>
</body>
</html>
